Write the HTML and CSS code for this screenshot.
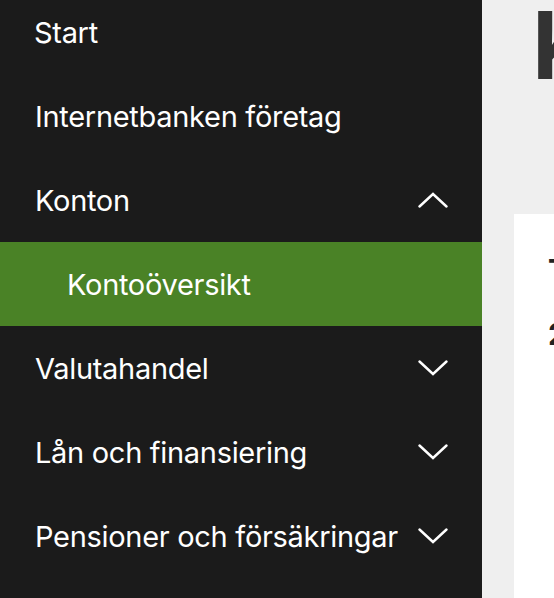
FILE: index.html
```html
<!DOCTYPE html>
<html lang="sv">
<head>
<meta charset="UTF-8">
<meta name="viewport" content="width=device-width, initial-scale=1.0">
<title>Kontoöversikt</title>
<link rel="stylesheet" href="styles.css">
</head>
<body>

<div class="layout">
  <!-- sidomeny -->
  <nav class="sidebar">
    <ul class="menu">
      <li class="menu-item"><a href="#">Start</a></li>
      <li class="menu-item"><a href="#">Internetbanken företag</a></li>
      <li class="menu-item open">
        <a href="#">Konton</a>
        <svg class="chevron" viewBox="0 0 30 16"><path d="M1.5 14.5 L15 2 L28.5 14.5"/></svg>
      </li>
      <li class="menu-item sub active"><a href="#">Kontoöversikt</a></li>
      <li class="menu-item">
        <a href="#">Valutahandel</a>
        <svg class="chevron" viewBox="0 0 30 16"><path d="M1.5 1.5 L15 14 L28.5 1.5"/></svg>
      </li>
      <li class="menu-item">
        <a href="#">Lån och finansiering</a>
        <svg class="chevron" viewBox="0 0 30 16"><path d="M1.5 1.5 L15 14 L28.5 1.5"/></svg>
      </li>
      <li class="menu-item">
        <a href="#">Pensioner och försäkringar</a>
        <svg class="chevron" viewBox="0 0 30 16"><path d="M1.5 1.5 L15 14 L28.5 1.5"/></svg>
      </li>
    </ul>
  </nav>

  <main class="content">
    <h1>Kontoöversikt</h1>
    <div class="card">
      <p class="card-title">Totalt saldo</p>
      <p class="card-value">2 458 300,00 SEK</p>
    </div>
  </main>
</div>

</body>
</html>
```

FILE: styles.css
```css
body {
  margin: 0;
  font-family: Inter, "Noto Sans", Arial, sans-serif;
  background: #efefef;
  overflow: hidden;
}

.layout {
  display: flex;
  height: 598px;
}

.sidebar {
  width: 482px;
  flex-shrink: 0;
  background: #1b1b1b;
}

.menu {
  list-style: none;
  margin: -10px 0 0;
  padding: 0;
}

.menu-item {
  height: 84px;
  display: flex;
  align-items: center;
  justify-content: space-between;
  padding: 0 34px 0 35px;
}

.menu-item a {
  color: #fff;
  text-decoration: none;
  font-size: 29px;
  letter-spacing: -0.3px;
}

.menu-item:first-child a {
  margin-left: -1px;
}

.menu-item.sub {
  padding-left: 67px;
}

.menu-item.active {
  background: #4a8226;
}

.chevron {
  width: 30px;
  height: 16px;
  flex-shrink: 0;
  fill: none;
  stroke: #fff;
  stroke-width: 2.4;
  stroke-linecap: round;
  stroke-linejoin: miter;
}

.content {
  flex: 1;
  padding: 0 0 0 32px;
  overflow: hidden;
}

.content h1 {
  margin: -3px 0 0;
  padding-left: 18px;
  font-size: 94px;
  font-weight: 700;
  color: #333;
  white-space: nowrap;
  line-height: 96px;
}

.card {
  margin-top: 121px;
  background: #fff;
  height: 400px;
  padding: 24px 0 0 34px;
  white-space: nowrap;
}

.card p {
  margin: 0;
  font-size: 30px;
  font-weight: 700;
  color: #222;
  line-height: 64px;
}
```
